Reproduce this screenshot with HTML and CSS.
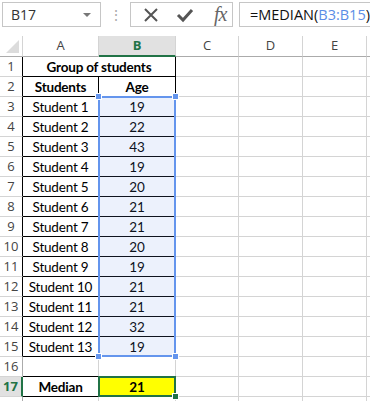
FILE: index.html
```html
<!DOCTYPE html>
<html lang="en">
<head>
    <meta charset="UTF-8">
    <title>Median</title>
    <link rel="stylesheet" href="styles.css">
</head>
<body>
    <div class="toolbar">
        <div class="name-box">
            <span>B17</span>
            <span class="drop"></span>
        </div>
        <div class="dots">&#8942;</div>
        <div class="fx-buttons">
            <svg width="16" height="16" viewBox="0 0 16 16">
                <path d="M2 2L14 14M14 2L2 14" stroke="#555" stroke-width="2" fill="none"/>
            </svg>
            <svg width="18" height="16" viewBox="0 0 18 16">
                <path d="M2 8L7 13L16 3" stroke="#555" stroke-width="3" fill="none"/>
            </svg>
            <span class="fx">fx</span>
        </div>
        <div class="formula">=MEDIAN(<span class="ref">B3:B15</span>)</div>
    </div>

    <div class="sheet">
        <div class="corner"><span class="tri"></span></div>
        <div class="col">A</div>
        <div class="col sel">B</div>
        <div class="col">C</div>
        <div class="col">D</div>
        <div class="col">E</div>
        <div class="col"></div>

        <div class="row-num edge">1</div>
        <div class="cell span2 bold boxed">Group of students</div>
        <div class="cell"></div><div class="cell"></div><div class="cell"></div><div class="cell"></div>

        <div class="row-num edge">2</div>
        <div class="cell bold boxed">Students</div>
        <div class="cell bold boxed">Age</div>
        <div class="cell"></div><div class="cell"></div><div class="cell"></div><div class="cell"></div>

        <div class="row-num edge">3</div>
        <div class="cell boxed">Student 1</div>
        <div class="cell boxed">19</div>
        <div class="cell"></div><div class="cell"></div><div class="cell"></div><div class="cell"></div>

        <div class="row-num edge">4</div>
        <div class="cell boxed">Student 2</div>
        <div class="cell boxed">22</div>
        <div class="cell"></div><div class="cell"></div><div class="cell"></div><div class="cell"></div>

        <div class="row-num edge">5</div>
        <div class="cell boxed">Student 3</div>
        <div class="cell boxed">43</div>
        <div class="cell"></div><div class="cell"></div><div class="cell"></div><div class="cell"></div>

        <div class="row-num edge">6</div>
        <div class="cell boxed">Student 4</div>
        <div class="cell boxed">19</div>
        <div class="cell"></div><div class="cell"></div><div class="cell"></div><div class="cell"></div>

        <div class="row-num edge">7</div>
        <div class="cell boxed">Student 5</div>
        <div class="cell boxed">20</div>
        <div class="cell"></div><div class="cell"></div><div class="cell"></div><div class="cell"></div>

        <div class="row-num edge">8</div>
        <div class="cell boxed">Student 6</div>
        <div class="cell boxed">21</div>
        <div class="cell"></div><div class="cell"></div><div class="cell"></div><div class="cell"></div>

        <div class="row-num edge">9</div>
        <div class="cell boxed">Student 7</div>
        <div class="cell boxed">21</div>
        <div class="cell"></div><div class="cell"></div><div class="cell"></div><div class="cell"></div>

        <div class="row-num edge">10</div>
        <div class="cell boxed">Student 8</div>
        <div class="cell boxed">20</div>
        <div class="cell"></div><div class="cell"></div><div class="cell"></div><div class="cell"></div>

        <div class="row-num edge">11</div>
        <div class="cell boxed">Student 9</div>
        <div class="cell boxed">19</div>
        <div class="cell"></div><div class="cell"></div><div class="cell"></div><div class="cell"></div>

        <div class="row-num edge">12</div>
        <div class="cell boxed">Student 10</div>
        <div class="cell boxed">21</div>
        <div class="cell"></div><div class="cell"></div><div class="cell"></div><div class="cell"></div>

        <div class="row-num edge">13</div>
        <div class="cell boxed">Student 11</div>
        <div class="cell boxed">21</div>
        <div class="cell"></div><div class="cell"></div><div class="cell"></div><div class="cell"></div>

        <div class="row-num edge">14</div>
        <div class="cell boxed">Student 12</div>
        <div class="cell boxed">32</div>
        <div class="cell"></div><div class="cell"></div><div class="cell"></div><div class="cell"></div>

        <div class="row-num edge">15</div>
        <div class="cell boxed">Student 13</div>
        <div class="cell boxed">19</div>
        <div class="cell"></div><div class="cell"></div><div class="cell"></div><div class="cell"></div>

        <div class="row-num">16</div>
        <div class="cell under"></div>
        <div class="cell under"></div>
        <div class="cell"></div><div class="cell"></div><div class="cell"></div><div class="cell"></div>

        <div class="row-num active">17</div>
        <div class="cell bold boxed">Median</div>
        <div class="cell bold boxed yellow">21</div>
        <div class="cell"></div><div class="cell"></div><div class="cell"></div><div class="cell"></div>

        <div class="row-num"></div>
        <div class="cell"></div><div class="cell"></div><div class="cell"></div><div class="cell"></div><div class="cell"></div><div class="cell"></div>

        <div class="range">
            <span class="handle tl"></span>
            <span class="handle tr"></span>
            <span class="handle bl"></span>
            <span class="handle br"></span>
        </div>
        <div class="active-cell"><span class="fill"></span></div>
    </div>
</body>
</html>
```

FILE: styles.css
```css
body {
    margin: 0;
    background-color: #fff;
    font-family: 'Open Sans', 'Liberation Sans', sans-serif;
    overflow: hidden;
}
.toolbar {
    display: flex;
    align-items: stretch;
    height: 25px;
    padding: 2px 0 0 2px;
}
.name-box {
    border: 1px solid #c6c6c6;
    display: flex;
    align-items: center;
    justify-content: space-between;
    padding: 0 9px 0 8px;
    box-sizing: border-box;
    font-size: 14px;
    color: #333;
    width: 103px;
}
.drop {
    width: 0;
    height: 0;
    border-left: 4px solid transparent;
    border-right: 4px solid transparent;
    border-top: 4px solid #777;
}
.dots {
    width: 30px;
    text-align: center;
    color: #aaa;
    font-size: 14px;
    line-height: 25px;
}
.fx-buttons {
    width: 107px;
    box-sizing: border-box;
    border: 1px solid #c6c6c6;
    display: flex;
    align-items: center;
    gap: 17px;
    padding-left: 12px;
}
.fx {
    font-family: 'Liberation Serif', serif;
    font-style: italic;
    font-size: 20px;
    color: #666;
    letter-spacing: -1px;
    margin-left: 3px;
}
.formula {
    margin-left: 6px;
    flex: 1;
    border: 1px solid #c6c6c6;
    border-right: none;
    font-size: 14.5px;
    line-height: 23px;
    padding-left: 10px;
    color: #111;
    white-space: nowrap;
}
.ref {
    color: #5b8de6;
}
.sheet {
    position: relative;
    margin-top: 9px;
    display: grid;
    grid-template-columns: 23px 76px 77px 63px 64px 64px 10px;
    grid-template-rows: 21px repeat(18, 20px);
    font-family: 'Lato', 'Liberation Sans', sans-serif;
    font-size: 13.5px;
    letter-spacing: -0.2px;
    color: #000;
}
.corner, .col {
    background-color: #fff;
    border-right: 1px solid #d4d4d4;
    border-bottom: 1px solid #ababab;
    box-sizing: border-box;
    text-align: center;
    font-family: 'Open Sans', 'Liberation Sans', sans-serif;
    font-size: 13px;
    letter-spacing: 0;
    color: #444;
    line-height: 19px;
}
.corner {
    position: relative;
}
.tri {
    position: absolute;
    right: 3px;
    bottom: 3px;
    width: 0;
    height: 0;
    border-left: 13px solid transparent;
    border-bottom: 13px solid #dcdcdc;
}
.col.sel {
    background-color: #e1e1e1;
    border-bottom: 2px solid #217346;
    color: #217346;
    font-weight: bold;
}
.row-num {
    border-right: 1px solid #ababab;
    border-bottom: 1px solid #d4d4d4;
    box-sizing: border-box;
    text-align: center;
    font-family: 'Open Sans', 'Liberation Sans', sans-serif;
    font-size: 13px;
    letter-spacing: 0;
    color: #444;
    line-height: 19px;
}
.row-num.edge {
    border-right-color: #000;
}
.row-num.active {
    background-color: #e1e1e1;
    border-right: 2px solid #217346;
    color: #217346;
    font-weight: bold;
}
.cell {
    border-right: 1px solid #d4d4d4;
    border-bottom: 1px solid #d4d4d4;
    box-sizing: border-box;
    text-align: center;
    line-height: 20px;
    white-space: nowrap;
    overflow: hidden;
}
.span2 {
    grid-column: span 2;
}
.bold {
    font-weight: bold;
}
.boxed {
    border-right-color: #000;
    border-bottom-color: #000;
}
.under {
    border-bottom-color: #000;
}
.yellow {
    background-color: #ffff00;
}
.range {
    position: absolute;
    left: 98px;
    top: 60px;
    width: 78px;
    height: 261px;
    border: 2px solid #6495ed;
    box-sizing: border-box;
    background-color: rgba(110, 150, 230, 0.13);
}
.handle {
    position: absolute;
    width: 5px;
    height: 5px;
    background-color: #6495ed;
    border: 1px solid #fff;
}
.tl { left: -5px; top: -5px; }
.tr { right: -5px; top: -5px; }
.bl { left: -5px; bottom: -5px; }
.br { right: -5px; bottom: -5px; }
.active-cell {
    position: absolute;
    left: 98px;
    top: 340px;
    width: 78px;
    height: 21px;
    border: 2px solid #217346;
    box-sizing: border-box;
}
.fill {
    position: absolute;
    right: -5px;
    bottom: -5px;
    width: 5px;
    height: 5px;
    background-color: #217346;
    border: 1px solid #fff;
}
```
